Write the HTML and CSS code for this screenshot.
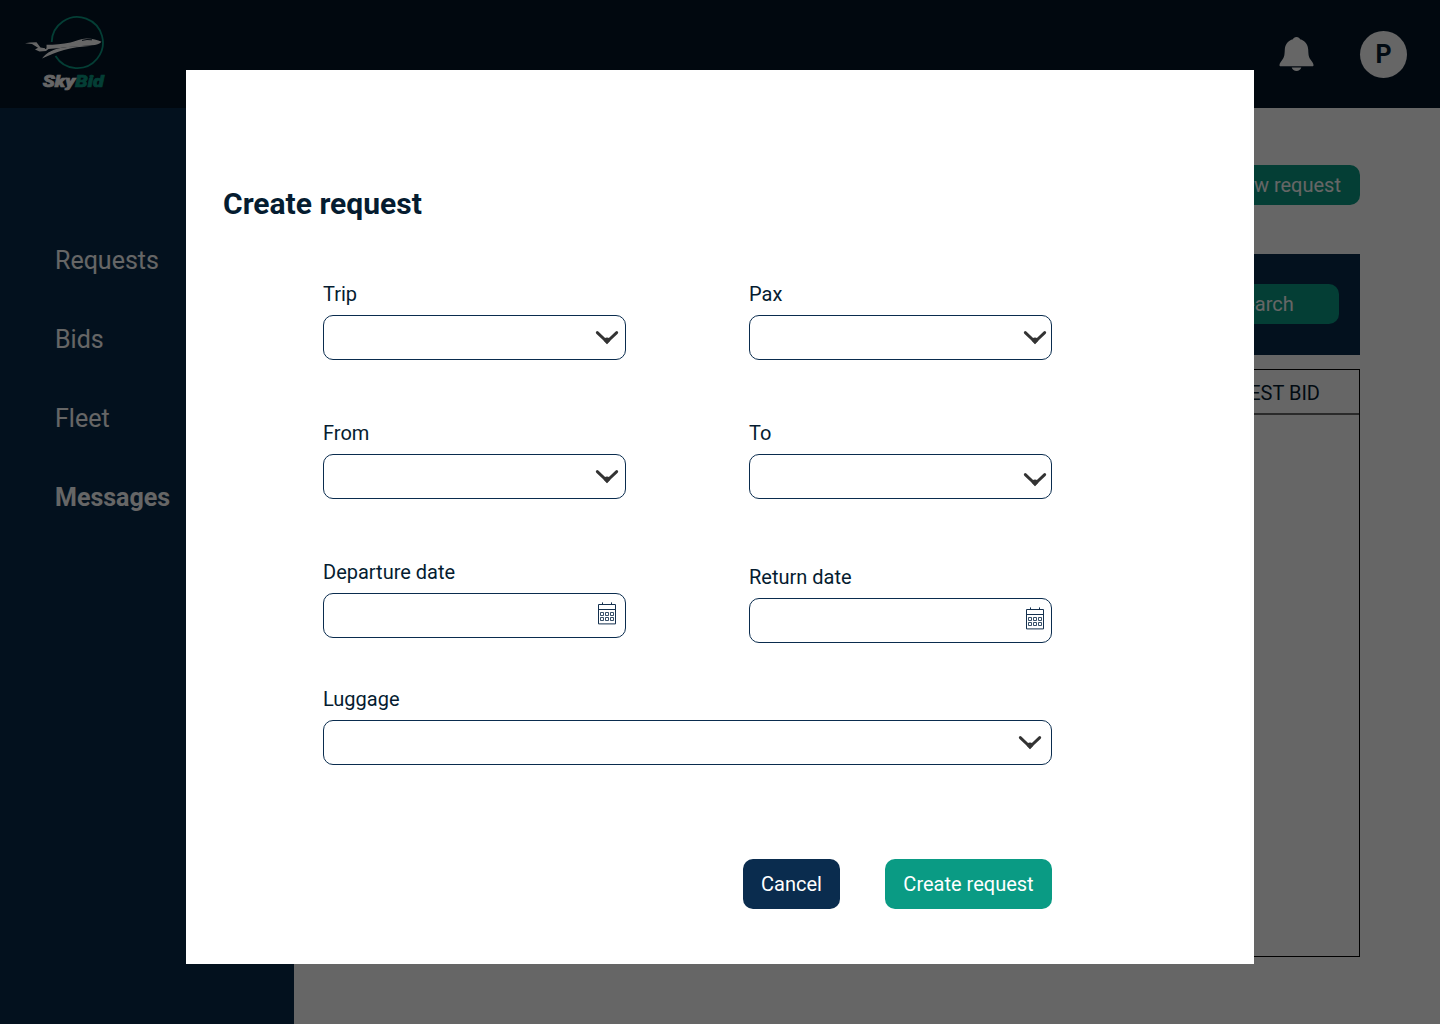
FILE: index.html
```html
<!DOCTYPE html>
<html lang="en">
<head>
<meta charset="utf-8">
<title>SkyBid</title>
<link rel="stylesheet" href="styles.css">
</head>
<body>
<svg class="defs" aria-hidden="true">
  <symbol id="chevron" viewBox="0 0 24 15">
    <path d="M2.300 2.600 12 11.800 21.700 2.600" fill="none" stroke="#333" stroke-width="2.900" stroke-linecap="round"/>
    <path d="M9.500 8.300q2.500-1.400 5 0l.8 2.500L12 14.200l-3.300-3.400z" fill="#333"/>
  </symbol>
  <symbol id="calendar" viewBox="0 0 18 23">
    <g fill="none" stroke="#14304e" stroke-width="1">
      <path d="M.5 2.500h17v19.400H.5zM.5 7.500h17M4.500.4v2.500M13.500.4v2.500"/>
      <path d="M2.500 10.500h3v3h-3zM7.500 10.500h3v3h-3zM12.500 10.500h3v3h-3zM2.500 15.500h3v3h-3zM7.500 15.500h3v3h-3zM12.500 15.500h3v3h-3z" stroke-width=".85"/>
    </g>
  </symbol>
</svg>
<div class="app">
  <header class="topbar">
    <svg class="logo" width="84" height="80" viewBox="0 0 84 80" role="img" aria-label="SkyBid">
      <path d="M26.700 27A25.600 25.600 0 1 1 30.500 41" fill="none" stroke="#0a9b84" stroke-width="1.800"/>
      <path d="M0 28.300l5-.9 6.500-.2 4 5.200 6 1v-3.600c8-.2 16-1 24-2.400 6-1.600 10-3.800 16-4 6 0 11 1.300 15 3.400-2 2.300-5 3.200-10 3.500l-20 1.500c-8 .8-15 1.700-23 2.300l-2.500 2-6.500.3-4.500-2 3-1.700-6-3.800z" fill="#fff"/>
      <path d="M17 43.500c5-6.500 12-9.500 20-10.800 9-1.500 18-1.800 30-2-11 .9-20 2-28 4.200-8 2-14 5-22 8.600z" fill="#fff"/>
      <path d="M20.600 29.500v4.500M57 25.400l5-.9 5 .3" fill="none" stroke="#041527" stroke-width="1"/>
      <text class="logo-text" x="17.800" y="71.500" textLength="61" lengthAdjust="spacingAndGlyphs"><tspan class="sky">Sky</tspan><tspan class="bid">Bid</tspan></text>
    </svg>
    <div class="account">
      <svg class="bell" width="35" height="34" viewBox="0 0 34 34" fill="#fff">
        <path d="M17 0c-2 0-3 1-3.500 2.200C8.500 3.500 5.500 7.500 5.300 12.500 5 18 5 20 2.500 23.200.8 25.300 0 26.500 0 28.200c0 .7.400 1 1 1h32c.6 0 1-.3 1-1 0-1.700-.8-2.900-2.500-5C29 20 29 18 28.700 12.500 28.500 7.500 25.500 3.500 20.500 2.200 20 1 19 0 17 0z"/>
        <path d="M12.200 30.500h9.600c-.8 2-2.500 3.500-4.800 3.500s-4-1.500-4.800-3.500z"/>
      </svg>
      <span class="avatar">P</span>
    </div>
  </header>
  <div class="body">
    <nav class="sidebar">
      <a>Requests</a>
      <a>Bids</a>
      <a>Fleet</a>
      <a class="active">Messages</a>
    </nav>
    <main class="content">
      <button class="green new-request">New request</button>
      <div class="searchbar"><button class="green search">Search</button></div>
      <div class="table"><div class="table-head">LOWEST BID</div></div>
    </main>
  </div>
</div>
<div class="overlay">
  <section class="modal" role="dialog">
    <h1>Create request</h1>
    <form class="form">
      <div class="field"><label>Trip</label><div class="input"><svg class="chevron"><use href="#chevron"/></svg></div></div>
      <div class="field"><label>Pax</label><div class="input near"><svg class="chevron"><use href="#chevron"/></svg></div></div>
      <div class="field"><label>From</label><div class="input"><svg class="chevron"><use href="#chevron"/></svg></div></div>
      <div class="field"><label>To</label><div class="input near low"><svg class="chevron"><use href="#chevron"/></svg></div></div>
      <div class="field departure"><label>Departure date</label><div class="input date"><svg class="calendar"><use href="#calendar"/></svg></div></div>
      <div class="field return"><label>Return date</label><div class="input date return-date"><svg class="calendar"><use href="#calendar"/></svg></div></div>
      <div class="field luggage"><label>Luggage</label><div class="input wide"><svg class="chevron"><use href="#chevron"/></svg></div></div>
      <div class="actions">
        <button class="navy cancel" type="button">Cancel</button>
        <button class="green create" type="button">Create request</button>
      </div>
    </form>
  </section>
</div>
</body>
</html>
```
FILE: styles.css
```css
* { box-sizing: border-box; }

body {
  margin: 0;
  font-family: Roboto, "Liberation Sans", sans-serif;
  font-size: 20px;
  line-height: 24px;
  color: #051c30;
}

button {
  border: 0;
  padding: 0;
  border-radius: 10px;
  font: inherit;
  color: #fff;
}

.green { background: #0a9b84; }
.navy { background: #0a2c4e; }
.defs { display: none; }

.app {
  height: 1024px;
  display: flex;
  flex-direction: column;
  overflow: hidden;
}

.topbar {
  height: 108px;
  flex: none;
  display: flex;
  justify-content: space-between;
  padding: 15px 33px 0 25px;
  background: #041527;
}

.logo-text {
  font-size: 17px;
  font-weight: 900;
  font-style: italic;
  stroke-width: .7px;
}

.sky { fill: #fff; stroke: #fff; }
.bid { fill: #0a9b84; stroke: #0a9b84; }

.account {
  display: flex;
  gap: 46px;
  padding-top: 16px;
}

.bell { margin-top: 6px; }

.avatar {
  width: 47px;
  height: 47px;
  border-radius: 50%;
  background: #fff;
  font-size: 25px;
  font-weight: 700;
  line-height: 48px;
  text-align: center;
}

.body {
  flex: 1;
  display: flex;
}

.sidebar {
  width: 294px;
  display: flex;
  flex-direction: column;
  gap: 49px;
  padding: 138px 0 0 55px;
  background: #092c4c;
  color: #fff;
  font-size: 25px;
  line-height: 30px;
}

.active { font-weight: 700; }

.content {
  flex: 1;
  display: flex;
  flex-direction: column;
  padding: 57px 80px 67px 66px;
}

.new-request {
  align-self: flex-end;
  width: 145px;
  height: 40px;
  padding-right: 19px;
  text-align: right;
}

.searchbar {
  height: 101px;
  margin-top: 49px;
  padding: 30px 21px 0 0;
  display: flex;
  justify-content: flex-end;
  background: #092c4c;
}

.search {
  width: 152px;
  height: 40px;
}

.table {
  flex: 1;
  margin-top: 14px;
  border: 1px solid #000;
}

.table-head {
  height: 45px;
  padding-right: 39px;
  border-bottom: 2px solid #777;
  border-bottom-color: #6a6a6a;
  line-height: 46px;
  text-align: right;
}

.overlay {
  position: fixed;
  inset: 0;
  display: flex;
  justify-content: center;
  align-items: flex-start;
  padding-top: 70px;
  background: rgba(0, 0, 0, .6);
}

.modal {
  width: 1068px;
  height: 894px;
  padding: 116px 37px 0;
  background: #fff;
}

h1 {
  margin: 0;
  font-size: 30px;
  line-height: 36px;
  font-weight: 700;
}

.form {
  display: grid;
  grid-template-columns: 303px 303px;
  column-gap: 123px;
  padding: 60px 0 0 100px;
}

.field {
  display: flex;
  flex-direction: column;
  gap: 9px;
  margin-bottom: 61px;
}

.input {
  height: 45px;
  display: flex;
  justify-content: flex-end;
  align-items: flex-start;
  padding: 14px 6px 0 0;
  border: 1px solid #0a2c4e;
  border-radius: 10px;
}

.near { padding-right: 4px; }
.low { padding-top: 17px; }
.date { padding: 8px 9px 0 0; }
.return-date { padding-right: 7px; }
.wide { padding-right: 9px; }

.chevron {
  width: 24px;
  height: 15px;
}

.calendar {
  width: 18px;
  height: 23px;
}

.departure { margin-bottom: 49px; }

.return {
  margin-top: 5px;
  margin-bottom: 44px;
}

.luggage {
  grid-column: 1 / -1;
  margin-bottom: 94px;
}

.actions {
  grid-column: 1 / -1;
  display: flex;
  justify-content: flex-end;
  gap: 45px;
}

.actions button { height: 50px; }
.cancel { width: 97px; }
.create { width: 167px; }
```
